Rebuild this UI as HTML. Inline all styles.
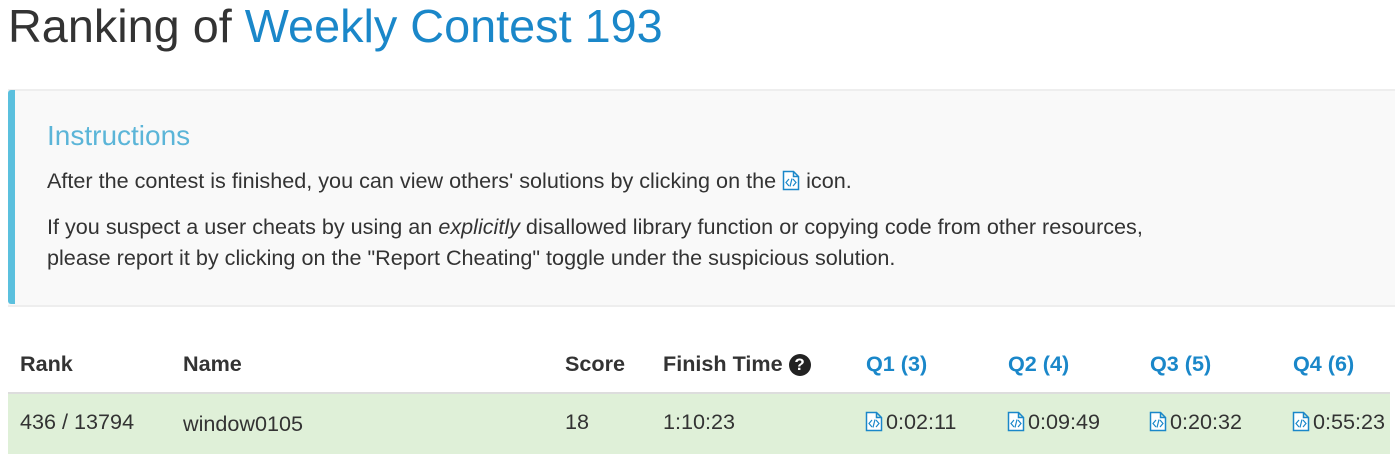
<!DOCTYPE html>
<html><head><meta charset="utf-8"><style>
body{margin:0;background:#fff;font-family:"Liberation Sans",Arial,sans-serif;color:#333;width:1395px;height:452px;overflow:hidden;position:relative}
.a{position:absolute;white-space:nowrap}
h1{position:absolute;left:8px;top:-1px;margin:0;font-weight:400;font-size:46.8px;line-height:54px;color:#333}
h1 span{color:#1a87c9}
.box{position:absolute;left:8px;top:89px;width:1387px;height:214px;background:#f9f9f9;border-top:2px solid #eee;border-bottom:2px solid #eee}
.bar{position:absolute;left:8px;top:90px;width:7px;height:214px;background:#5bc0de;border-radius:3px 0 0 3px}
.t{font-size:21.6px;color:#333}
.th{font-size:21.6px;font-weight:bold;color:#333;top:351px}
.q{color:#1a87c9}
.row{position:absolute;left:8px;top:392px;width:1382px;height:60px;background:#dff0d8;border-top:2px solid #ddd}
.td{top:409px;font-size:21.6px;color:#333}
svg{vertical-align:-3px;margin-right:3px}
</style></head><body>
<h1>Ranking of <span>Weekly Contest 193</span></h1>
<div class="box"></div><div class="bar"></div>
<div class="a" style="left:47px;top:120px;font-size:28px;color:#5bb5d8">Instructions</div>
<div class="a t" style="left:47px;top:168px">After the contest is finished, you can view others' solutions by clicking on the <svg width="18" height="21" viewBox="0 0 18 21" style="margin-right:0"><path d="M1.5 1.5h10l5 5v13h-15z M11.5 1.5v5h5" fill="#fff" stroke="#1a87c9" stroke-width="1.5"/><path d="M7 9l-3 3.5 3 3.5M11 9l3 3.5-3 3.5M10 8.5l-2 8" fill="none" stroke="#1a87c9" stroke-width="1.2"/></svg> icon.</div>
<div class="a t" style="left:47px;top:214px">If you suspect a user cheats by using an <i>explicitly</i> disallowed library function or copying code from other resources,</div>
<div class="a t" style="left:47px;top:245px">please report it by clicking on the "Report Cheating" toggle under the suspicious solution.</div>
<div class="a th" style="left:20px">Rank</div>
<div class="a th" style="left:183px">Name</div>
<div class="a th" style="left:565px">Score</div>
<div class="a th" style="left:663px">Finish Time <span style="display:inline-block;width:22px;height:22px;border-radius:50%;background:#222;color:#fff;font-size:17px;text-align:center;line-height:22px;vertical-align:1px">?</span></div>
<div class="a th q" style="left:866px">Q1 (3)</div>
<div class="a th q" style="left:1008px">Q2 (4)</div>
<div class="a th q" style="left:1150px">Q3 (5)</div>
<div class="a th q" style="left:1293px">Q4 (6)</div>
<div class="row"></div>
<div class="a td" style="left:20px">436 / 13794</div>
<div class="a td" style="left:183px;top:411px">window0105</div>
<div class="a td" style="left:565px">18</div>
<div class="a td" style="left:663px">1:10:23</div>
<div class="a td" style="left:865px"><svg width="18" height="21" viewBox="0 0 18 21"><path d="M1.5 1.5h10l5 5v13h-15z M11.5 1.5v5h5" fill="#fff" stroke="#1a87c9" stroke-width="1.5"/><path d="M7 9l-3 3.5 3 3.5M11 9l3 3.5-3 3.5M10 8.5l-2 8" fill="none" stroke="#1a87c9" stroke-width="1.2"/></svg>0:02:11</div>
<div class="a td" style="left:1007px"><svg width="18" height="21" viewBox="0 0 18 21"><path d="M1.5 1.5h10l5 5v13h-15z M11.5 1.5v5h5" fill="#fff" stroke="#1a87c9" stroke-width="1.5"/><path d="M7 9l-3 3.5 3 3.5M11 9l3 3.5-3 3.5M10 8.5l-2 8" fill="none" stroke="#1a87c9" stroke-width="1.2"/></svg>0:09:49</div>
<div class="a td" style="left:1149px"><svg width="18" height="21" viewBox="0 0 18 21"><path d="M1.5 1.5h10l5 5v13h-15z M11.5 1.5v5h5" fill="#fff" stroke="#1a87c9" stroke-width="1.5"/><path d="M7 9l-3 3.5 3 3.5M11 9l3 3.5-3 3.5M10 8.5l-2 8" fill="none" stroke="#1a87c9" stroke-width="1.2"/></svg>0:20:32</div>
<div class="a td" style="left:1292px"><svg width="18" height="21" viewBox="0 0 18 21"><path d="M1.5 1.5h10l5 5v13h-15z M11.5 1.5v5h5" fill="#fff" stroke="#1a87c9" stroke-width="1.5"/><path d="M7 9l-3 3.5 3 3.5M11 9l3 3.5-3 3.5M10 8.5l-2 8" fill="none" stroke="#1a87c9" stroke-width="1.2"/></svg>0:55:23</div>
</body></html>
